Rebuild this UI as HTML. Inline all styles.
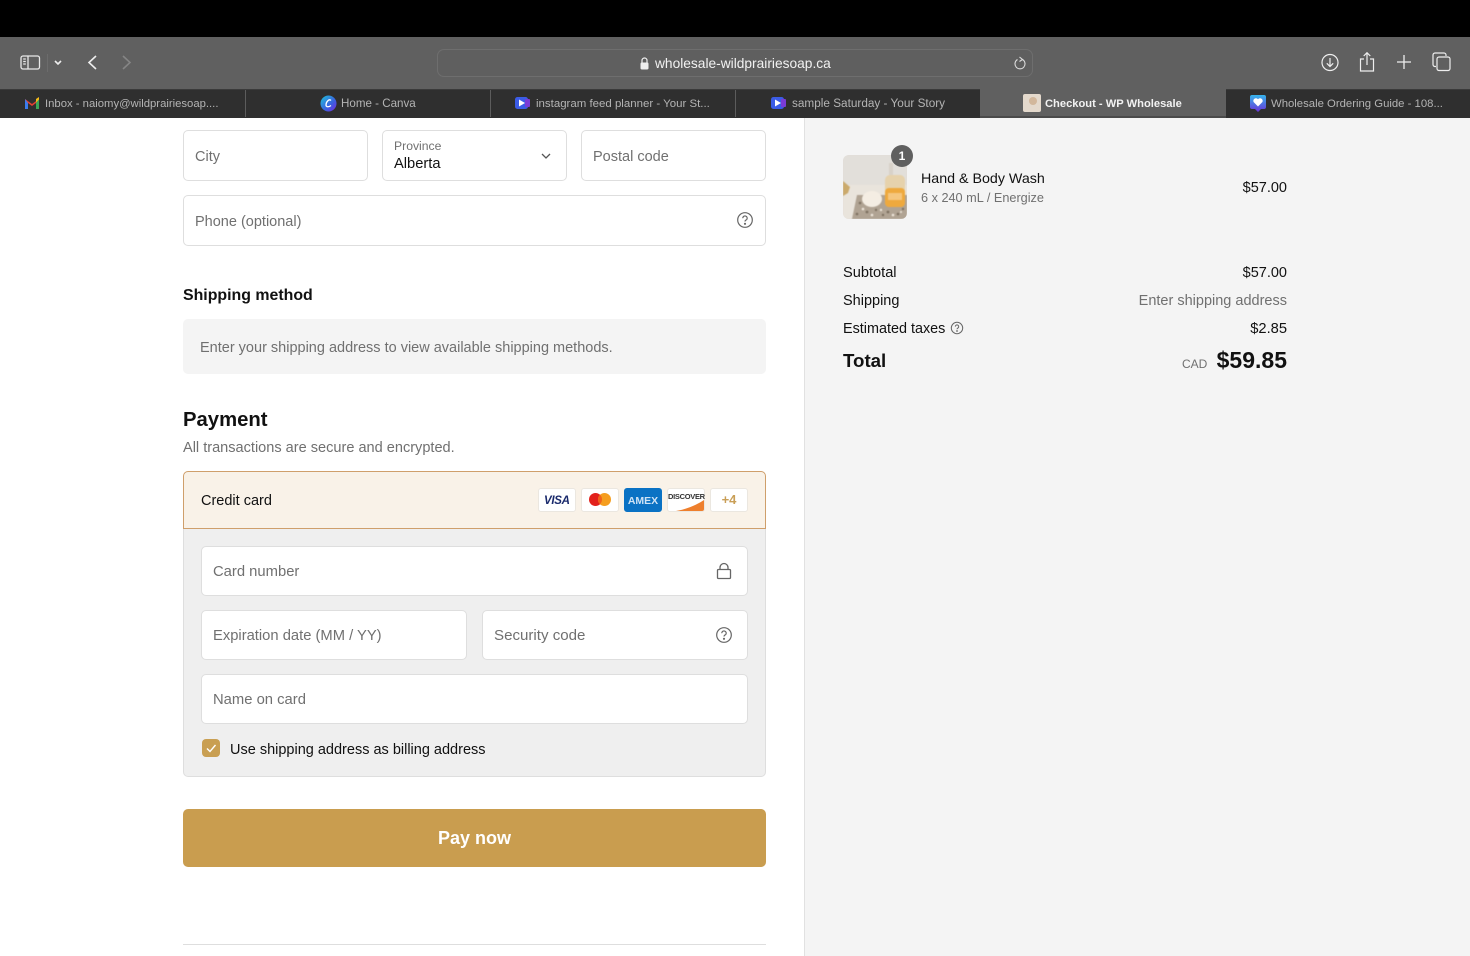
<!DOCTYPE html>
<html><head><meta charset="utf-8"><style>
html,body{margin:0;padding:0;background:#fff}
#p{position:relative;width:1470px;height:956px;overflow:hidden;font-family:"Liberation Sans",sans-serif;background:#fff}
#p div,#p svg{position:absolute}
.t{white-space:nowrap;line-height:18px}
.b{box-sizing:border-box;background:#fff;border:1px solid #dedede;border-radius:5px}
.g{color:#707070}
.k{color:#111}
.tab{top:98px;color:#b4b4b4;white-space:nowrap;line-height:13px}
.sep{top:90px;width:1px;height:27px;background:#5c5c5c}
.c{box-sizing:border-box;top:488px;width:38px;height:24px;background:#fff;border:1px solid #ebe7e0;border-radius:3px}
</style></head><body><div id="p">
<div style="left:0;top:0;width:1470px;height:37px;background:#000"></div>
<div style="left:0;top:37px;width:1470px;height:52px;background:#606060"></div>
<div style="left:0;top:89px;width:1470px;height:29px;background:#2f2f2f;border-top:1px solid #3a3a3a;box-sizing:border-box"></div>
<div style="left:980px;top:89px;width:246px;height:28px;background:#606060"></div>
<div style="left:980px;top:116px;width:246px;height:2px;background:#4a4a4a"></div>
<div class="sep" style="left:245px"></div><div class="sep" style="left:490px"></div><div class="sep" style="left:735px"></div>

<svg style="left:20px;top:54px" width="21" height="17" fill="none" stroke="#e8e8e8" stroke-width="1.3"><rect x="1" y="2" width="18.5" height="13" rx="2"/><path d="M8 2v13M3.2 5h2.600M3.200 7.500h2.600M3.200 10h2.600"/></svg>
<div style="left:47px;top:54px;width:1px;height:18px;background:#6c6c6c"></div>
<svg style="left:53px;top:58px" width="10" height="9" fill="none" stroke="#eee" stroke-width="1.600"><path d="M2 3l3 3 3-3"/></svg>
<svg style="left:86px;top:54px" width="12" height="17" fill="none" stroke="#eee" stroke-width="1.600"><path d="M10 2L3 8.500l7 6.500"/></svg>
<svg style="left:121px;top:54px" width="12" height="17" fill="none" stroke="#858585" stroke-width="1.600"><path d="M2 2l7 6.500-7 6.500"/></svg>

<div style="left:437px;top:49px;width:596px;height:28px;box-sizing:border-box;border:1px solid #6e6e6e;border-radius:7px;background:#5f5f5f"></div>
<svg style="left:639px;top:56px" width="11" height="15"><path d="M3 7V4.500a2.500 2.500 0 015 0V7" fill="none" stroke="#eee" stroke-width="1.200"/><rect x="1.500" y="6.500" width="8" height="7" rx="1.200" fill="#eee"/></svg>
<div class="t" style="left:655px;top:55px;font-size:13.750px;color:#f2f2f2">wholesale-wildprairiesoap.ca</div>
<svg style="left:1012px;top:56px" width="16" height="16" fill="none" stroke="#ddd" stroke-width="1.100"><path d="M10.500 3.500A5 5 0 1 1 5.500 3.500"/><path d="M7.500 1l3 2.500-3 2"/></svg>

<svg style="left:1320px;top:52px" width="20" height="20" fill="none" stroke="#eee" stroke-width="1.200"><circle cx="10" cy="10.500" r="8"/><path d="M10 6v8.500M6.800 11.300l3.200 3.200 3.200-3.200"/></svg>
<svg style="left:1358px;top:51px" width="18" height="22" fill="none" stroke="#eee" stroke-width="1.200"><path d="M6 8H2.500v12h13V8H12M9 14V2M5.700 5L9 1.700 12.300 5"/></svg>
<svg style="left:1396px;top:54px" width="16" height="16" fill="none" stroke="#eee" stroke-width="1.300"><path d="M8 1v14M1 8h14"/></svg>
<svg style="left:1432px;top:52px" width="20" height="20" fill="none" stroke="#eee" stroke-width="1.200"><path d="M4 14.500H3a2 2 0 01-2-2V3a2 2 0 012-2h9a2 2 0 012 2v1"/><rect x="5" y="5" width="13" height="13.500" rx="2"/></svg>

<svg style="left:25px;top:97px" width="14" height="12"><path d="M0 2l7 5 7-5v10h-3V6L7 9 3 6v6H0z" fill="#e34133"/><path d="M0 2v10h3V6z" fill="#3b7ded"/><path d="M14 2v10h-3V6z" fill="#3aa757"/><path d="M11 5.500V2l3-2v2.500z" fill="#f6bb18"/></svg>
<div class="tab" style="left:45px;font-size:11.300px">Inbox - naiomy@wildprairiesoap....</div>
<svg style="left:320px;top:95px" width="17" height="17"><defs><linearGradient id="cv" x1="0" y1="0" x2="1" y2="1"><stop offset="0" stop-color="#1fc4d8"/><stop offset=".6" stop-color="#3b5fe0"/><stop offset="1" stop-color="#7a2ae0"/></linearGradient></defs><circle cx="8.500" cy="8.500" r="8" fill="url(#cv)"/><path d="M11 5.500C9 3.500 6 7 6 10c0 2 2.500 2.500 5 .5" fill="none" stroke="#fff" stroke-width="1.300"/></svg>
<div class="tab" style="left:341px;top:97px;font-size:11.600px">Home - Canva</div>
<svg style="left:515px;top:96px" width="15" height="14"><rect x="0" y="1" width="13" height="12" rx="2.500" fill="#3b5ce6"/><rect x="10" y="3" width="5" height="8" rx="1" fill="#7a3bd6"/><path d="M4 3.500l6 3.500-6 3.500z" fill="#fff"/></svg>
<div class="tab" style="left:536px;font-size:11.460px">instagram feed planner - Your St...</div>
<svg style="left:771px;top:96px" width="15" height="14"><rect x="0" y="1" width="13" height="12" rx="2.500" fill="#3b5ce6"/><rect x="10" y="3" width="5" height="8" rx="1" fill="#7a3bd6"/><path d="M4 3.500l6 3.500-6 3.500z" fill="#fff"/></svg>
<div class="tab" style="left:792px;top:97px;font-size:11.770px">sample Saturday - Your Story</div>
<div style="left:1023px;top:94px;width:18px;height:18px;background:#e4d9cc;border-radius:2px"></div>
<div style="left:1029px;top:97px;width:8px;height:8px;border-radius:50%;background:#d2b79b"></div>
<div class="tab" style="left:1045px;color:#f2f2f2;font-weight:bold;font-size:11.160px">Checkout - WP Wholesale</div>
<svg style="left:1250px;top:95px" width="16" height="18"><defs><linearGradient id="hg" x1="0" y1="0" x2="0" y2="1"><stop offset="0" stop-color="#36b6ec"/><stop offset="1" stop-color="#6a32d8"/></linearGradient></defs><path d="M2 0h12a2 2 0 012 2v10a2 2 0 01-2 2h-3l-3 3-3-3H2a2 2 0 01-2-2V2a2 2 0 012-2z" fill="url(#hg)"/><path d="M8 11.500L3.800 7.300a2.500 2.500 0 014.200-3 2.500 2.500 0 014.200 3z" fill="#fff"/></svg>
<div class="tab" style="left:1271px;font-size:11.330px">Wholesale Ordering Guide - 108...</div>

<div style="left:804px;top:118px;width:666px;height:838px;background:#f4f4f4;border-left:1px solid #e1e1e1;box-sizing:border-box"></div>

<div class="b" style="left:183px;top:130px;width:185px;height:51px"></div>
<div class="t g" style="left:195px;top:148px;font-size:14.500px">City</div>
<div class="b" style="left:382px;top:130px;width:185px;height:51px"></div>
<div class="t g" style="left:394px;top:137px;font-size:12.200px">Province</div>
<div class="t k" style="left:394px;top:155px;font-size:14.700px">Alberta</div>
<svg style="left:540px;top:151px" width="12" height="10" fill="none" stroke="#555" stroke-width="1.300"><path d="M2 3l4 4 4-4"/></svg>
<div class="b" style="left:581px;top:130px;width:185px;height:51px"></div>
<div class="t g" style="left:593px;top:148px;font-size:14.500px">Postal code</div>
<div class="b" style="left:183px;top:195px;width:583px;height:51px"></div>
<div class="t g" style="left:195px;top:213px;font-size:14.500px">Phone (optional)</div>
<svg style="left:736px;top:211px" width="18" height="18" fill="none" stroke="#666" stroke-width="1.200"><circle cx="9" cy="9" r="7.300"/><path d="M6.800 7.200a2.200 2.200 0 114 1.200c-.8.700-1.800 1-1.800 2.100"/><circle cx="9" cy="12.800" r=".5" fill="#666"/></svg>

<div class="t k" style="left:183px;top:287px;font-size:15.900px;font-weight:bold">Shipping method</div>
<div style="left:183px;top:319px;width:583px;height:55px;background:#f4f4f4;border-radius:5px"></div>
<div class="t g" style="left:200px;top:339px;font-size:14.500px">Enter your shipping address to view available shipping methods.</div>

<div class="t k" style="left:183px;top:410px;font-size:20.300px;font-weight:bold;line-height:20px">Payment</div>
<div class="t g" style="left:183px;top:439px;font-size:14.550px">All transactions are secure and encrypted.</div>

<div style="left:183px;top:528px;width:583px;height:249px;box-sizing:border-box;background:#efefef;border:1px solid #dedede;border-top:0;border-radius:0 0 5px 5px"></div>
<div style="left:183px;top:471px;width:583px;height:58px;box-sizing:border-box;background:#f9f2e8;border:1px solid #cf9f6b;border-radius:5px 5px 0 0"></div>
<div class="t k" style="left:201px;top:492px;font-size:14.500px">Credit card</div>

<div class="c" style="left:538px"></div>
<div class="t" style="left:544px;top:492px;font-size:11.500px;font-weight:bold;font-style:italic;color:#1a2a6c;letter-spacing:-.3px">VISA</div>
<div class="c" style="left:581px"></div>
<svg style="left:588px;top:492px" width="24" height="16"><circle cx="7.500" cy="7.500" r="6.500" fill="#e2211c"/><circle cx="16.500" cy="7.500" r="6.500" fill="#f59e1f"/><path d="M12 2.800a6.500 6.500 0 010 9.400 6.500 6.500 0 010-9.400z" fill="#f0641e"/></svg>
<div class="c" style="left:624px;background:#0a72c4;border-color:#0a72c4"></div>
<div class="t" style="left:624px;top:492px;font-size:10.500px;font-weight:bold;color:#cfe3f5;width:38px;text-align:center">AMEX</div>
<div class="c" style="left:667px;overflow:hidden"><svg style="left:0;top:0" width="36" height="22"><path d="M8 22C20 20 30 15 36 11v11z" fill="#ee7f2d"/></svg></div>
<div class="t" style="left:668px;top:488px;font-size:7.500px;font-weight:bold;color:#333;width:36px;text-align:center;letter-spacing:-.3px">DISCOVER</div>
<div class="c" style="left:710px"></div>
<div class="t" style="left:710px;top:491px;font-size:13px;font-weight:bold;color:#c99f57;width:38px;text-align:center">+4</div>

<div class="b" style="left:201px;top:546px;width:547px;height:50px"></div>
<div class="t g" style="left:213px;top:563px;font-size:14.800px">Card number</div>
<svg style="left:716px;top:562px" width="16" height="18" fill="none" stroke="#666" stroke-width="1.300"><rect x="1.500" y="7.500" width="13" height="9" rx="1"/><path d="M4 7.500V5.500a4 4 0 018 0v2"/></svg>
<div class="b" style="left:201px;top:610px;width:266px;height:50px"></div>
<div class="t g" style="left:213px;top:627px;font-size:14.750px">Expiration date (MM / YY)</div>
<div class="b" style="left:482px;top:610px;width:266px;height:50px"></div>
<div class="t g" style="left:494px;top:627px;font-size:15.100px">Security code</div>
<svg style="left:715px;top:626px" width="18" height="18" fill="none" stroke="#666" stroke-width="1.200"><circle cx="9" cy="9" r="7.300"/><path d="M6.800 7.200a2.200 2.200 0 114 1.200c-.8.700-1.800 1-1.800 2.100"/><circle cx="9" cy="12.800" r=".5" fill="#666"/></svg>
<div class="b" style="left:201px;top:674px;width:547px;height:50px"></div>
<div class="t g" style="left:213px;top:691px;font-size:14.800px">Name on card</div>
<div style="left:202px;top:739px;width:18px;height:18px;background:#c99f52;border-radius:4px"></div>
<svg style="left:202px;top:739px" width="18" height="18" fill="none" stroke="#fff" stroke-width="1.400"><path d="M5 9.500l3 3 5.500-6.500"/></svg>
<div class="t k" style="left:230px;top:741px;font-size:14.500px">Use shipping address as billing address</div>

<div style="left:183px;top:809px;width:583px;height:58px;background:#c99d4f;border-radius:5px"></div>
<div class="t" style="left:183px;top:829px;width:583px;text-align:center;color:#fff;font-size:18px;font-weight:bold">Pay now</div>
<div style="left:183px;top:944px;width:583px;height:1px;background:#dedede"></div>

<div style="left:843px;top:155px;width:64px;height:64px;border-radius:6px;overflow:hidden;background:#e2ddd6">
<svg style="left:0;top:0;filter:blur(.5px)" width="64" height="64"><rect width="64" height="64" fill="#e2dfda"/><rect y="30" width="64" height="34" fill="#e9e4dc"/>
<path d="M14 40h50v24H9z" fill="#b0a393"/>
<g fill="#7e7161"><circle cx="17" cy="48" r="1.300"/><circle cx="24" cy="57" r="1.400"/><circle cx="33" cy="55" r="1.200"/><circle cx="45" cy="57" r="1.400"/><circle cx="55" cy="59" r="1.300"/><circle cx="60" cy="54" r="1.200"/><circle cx="14" cy="59" r="1.300"/><circle cx="40" cy="60" r="1.200"/></g>
<g fill="#eee7db"><circle cx="20" cy="54" r="1.300"/><circle cx="29" cy="60" r="1.300"/><circle cx="38" cy="55" r="1.200"/><circle cx="50" cy="60" r="1.300"/><circle cx="58" cy="57" r="1"/></g>
<ellipse cx="29" cy="44" rx="10" ry="8" fill="#f4ede3"/>
<rect x="42" y="20" width="20" height="32" rx="5" fill="#e6d2ac"/><rect x="42" y="33" width="20" height="19" rx="4" fill="#eea93e"/><rect x="45" y="38" width="14" height="7" fill="#f5c67e"/>
<rect x="46" y="8" width="4" height="12" fill="#d8d2c9"/>
<path d="M0 26l7 6-2 6-5 3z" fill="#cbaa6c"/></svg>
</div>
<div style="left:891px;top:145px;width:22px;height:22px;border-radius:50%;background:#5f5f5f;color:#fff;font-size:12px;font-weight:bold;text-align:center;line-height:22px">1</div>
<div class="t k" style="left:921px;top:170px;font-size:14.250px">Hand &amp; Body Wash</div>
<div class="t g" style="left:921px;top:189px;font-size:12.700px">6 x 240 mL / Energize</div>
<div class="t k" style="right:183px;top:179px;font-size:14.500px">$57.00</div>

<div class="t k" style="left:843px;top:264px;font-size:14.600px">Subtotal</div>
<div class="t k" style="right:183px;top:264px;font-size:14.500px">$57.00</div>
<div class="t k" style="left:843px;top:292px;font-size:14.500px">Shipping</div>
<div class="t g" style="right:183px;top:292px;font-size:14.500px">Enter shipping address</div>
<div class="t k" style="left:843px;top:320px;font-size:14.400px">Estimated taxes</div>
<svg style="left:950px;top:321px" width="14" height="14" fill="none" stroke="#666" stroke-width="1"><circle cx="7" cy="7" r="5.700"/><path d="M5.300 5.600a1.700 1.700 0 113.100 1c-.6.500-1.400.8-1.400 1.700"/><circle cx="7" cy="10" r=".4" fill="#666"/></svg>
<div class="t k" style="right:183px;top:320px;font-size:14.700px">$2.85</div>
<div class="t k" style="left:843px;top:351px;font-size:18.700px;font-weight:bold;line-height:20px">Total</div>
<div class="t g" style="left:1182px;top:355px;font-size:12px">CAD</div>
<div class="t k" style="right:183px;top:350px;font-size:23px;font-weight:bold;line-height:21px">$59.85</div>
</div></body></html>
